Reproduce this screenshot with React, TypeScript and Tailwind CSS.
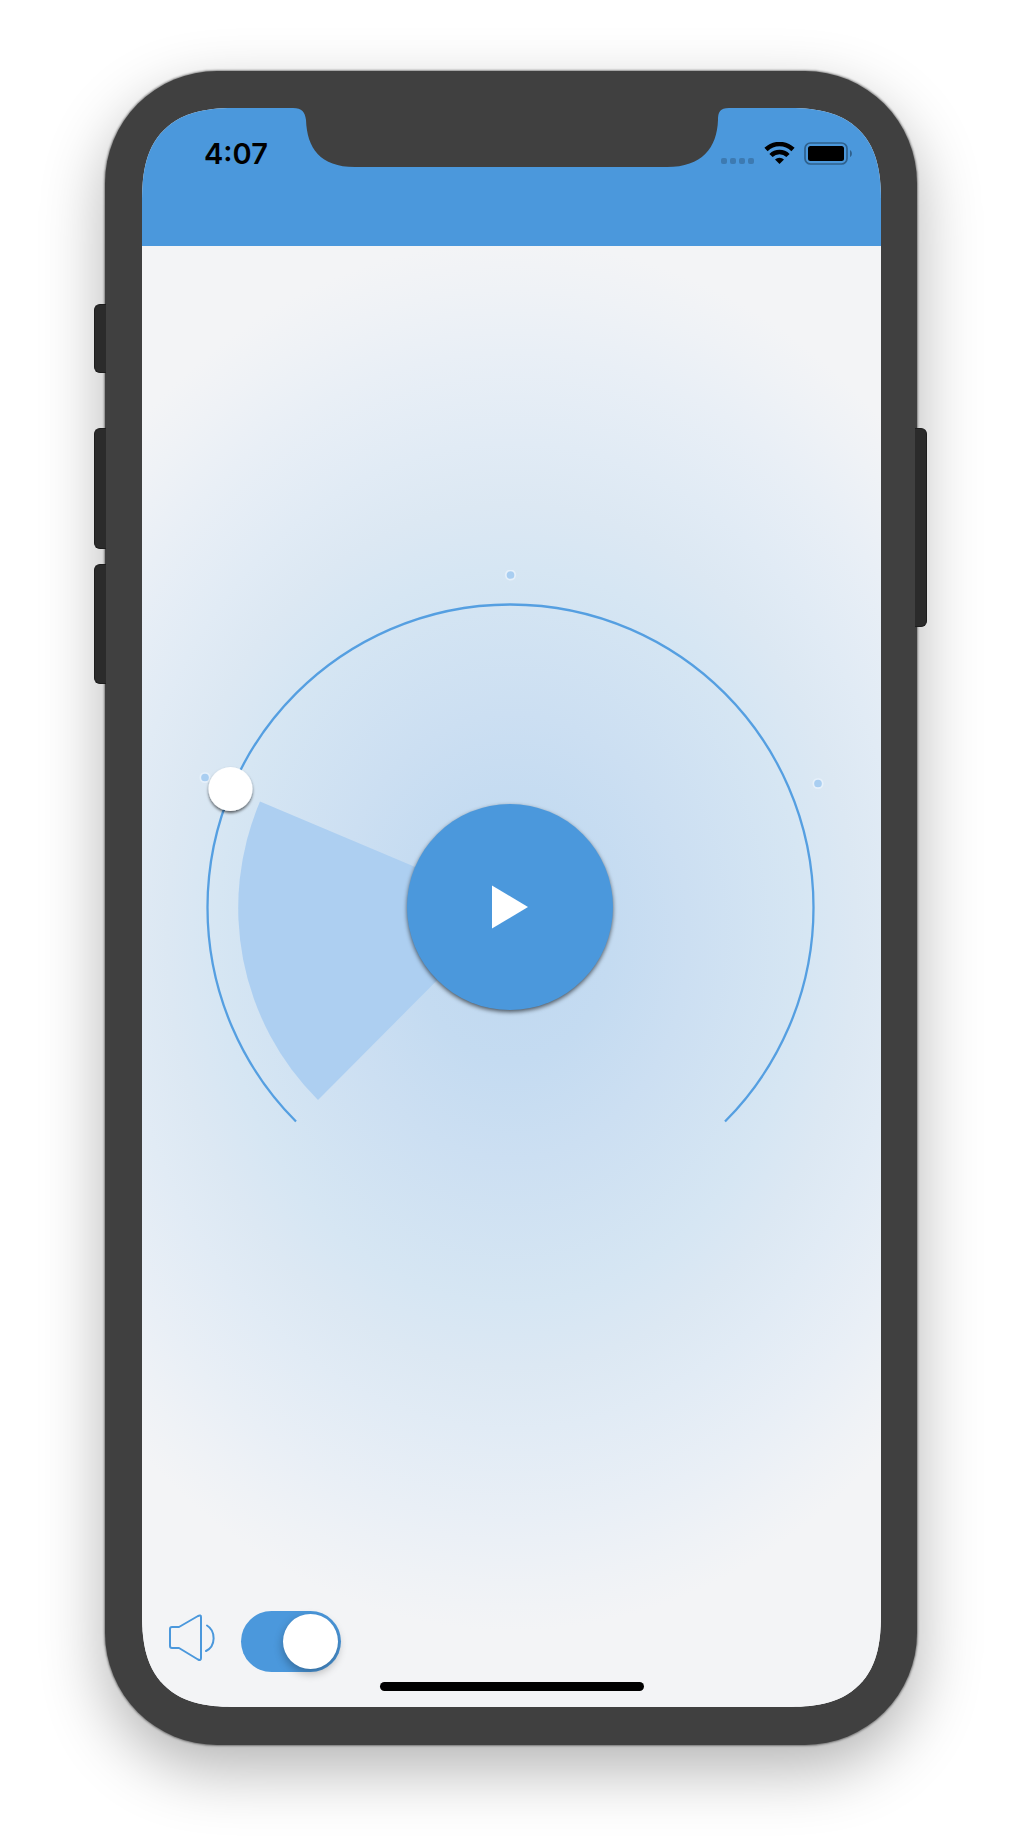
import { useState } from "react";

function Notch() {
  return (
    <svg viewBox="0 0 436 59" className="h-[59px] w-[436px]" fill="#404040" aria-hidden="true">
      <path d="M0 0H436C427 0 425 4 425 12C424 40 409 59 374 59H62C27 59 14 40 13 12C12 4 9 0 0 0Z" />
    </svg>
  );
}

function StatusIcons() {
  return (
    <svg viewBox="0 0 132 24" className="h-6 w-[132px]" aria-hidden="true">
      <g fill="#3d7ab1">
        <rect x="1" y="16" width="6" height="6" rx="2" />
        <rect x="10" y="16" width="6" height="6" rx="2" />
        <rect x="19" y="16" width="6" height="6" rx="2" />
        <rect x="28" y="16" width="6" height="6" rx="2" />
      </g>
      <g fill="none" stroke="#000" strokeWidth="4.600">
        <path d="M46 7.500A19.500 19.500 0 0 1 73 7.500" />
        <path d="M51 13.500A12 12 0 0 1 68 13.500" />
      </g>
      <path d="M59.500 22L55 17.500A6.500 6.500 0 0 1 64 17.500Z" fill="#000" />
      <rect x="85" y="1" width="42" height="21" rx="5.500" fill="none" stroke="#2f608c" strokeWidth="1.700" />
      <rect x="88" y="4" width="36" height="15" rx="2.500" fill="#000" />
      <path d="M130 8C132.500 9.500 132.500 14 130 15Z" fill="#2f608c" />
    </svg>
  );
}

function SpeakerIcon() {
  return (
    <svg viewBox="0 0 48 56" className="h-14 w-12" fill="none" stroke="#4b98dc" strokeWidth="2" strokeLinecap="round" strokeLinejoin="round" aria-hidden="true">
      <path d="M4 13H11L30 2Q33 0.500 33 3V44Q33 47 30 45.500L11 34H4Q2 34 2 32V15Q2 13 4 13Z" />
      <path d="M39 11.500C48 17 48 32 38 37" />
    </svg>
  );
}

function Dial() {
  return (
    <svg viewBox="2 0 640 580" className="block w-full" aria-hidden="true">
      <defs>
        <filter id="knob" x="-30%" y="-30%" width="160%" height="160%">
          <feDropShadow dx="0" dy="2" stdDeviation="1.500" floodColor="#000" floodOpacity="0.6" />
        </filter>
      </defs>
      <path d="M106 551.500A303 303 0 1 1 535 551.500" fill="none" stroke="#559fe1" strokeWidth="2.300" />
      <path d="M320 337L70 231.500A271 271 0 0 0 128 530Z" fill="#adcff1" />
      <g fill="#a9cef1" stroke="#e6f0fa" strokeWidth="1.700">
        <circle cx="320.500" cy="5" r="4.700" />
        <circle cx="15" cy="207.500" r="4.700" />
        <circle cx="628" cy="213.500" r="4.700" />
      </g>
      <circle cx="40.500" cy="219" r="22" fill="#fff" filter="url(#knob)" />
    </svg>
  );
}

export default function App() {
  const [playing, setPlaying] = useState(false);
  const [sound, setSound] = useState(true);

  return (
    <main className="flex min-h-screen justify-center bg-white px-[105px] pt-[71px] pb-[103px] font-[Inter,sans-serif]">
      <div className="relative flex w-full max-w-[812px] rounded-[112px] bg-[#404040] pt-[37px] pr-9 pb-[38px] pl-[37px] shadow-[0_0_2px_1px_rgba(0,0,0,0.4),0_24px_64px_rgba(0,0,0,0.3)]">
        <div className="absolute top-[233px] -left-[11px] h-[69px] w-3 rounded-l-md border border-r-0 border-[#1d1d1d] bg-[#2b2b2b]" />
        <div className="absolute top-[357px] -left-[11px] h-[121px] w-3 rounded-l-md border border-r-0 border-[#1d1d1d] bg-[#2b2b2b]" />
        <div className="absolute top-[493px] -left-[11px] h-[120px] w-3 rounded-l-md border border-r-0 border-[#1d1d1d] bg-[#2b2b2b]" />
        <div className="absolute top-[357px] -right-[10px] h-[199px] w-3 rounded-r-md border border-l-0 border-[#1d1d1d] bg-[#2b2b2b]" />

        <div className="relative flex w-full flex-col overflow-hidden rounded-[95px] bg-[#f3f4f6] [corner-shape:superellipse(1.4)]">
          <header className="flex h-[138px] items-start justify-between bg-[#4b98dc] pt-[34px] pr-[29px] pl-[62px]">
            <div className="absolute inset-x-0 top-0 flex justify-center pr-[2px]">
              <Notch />
            </div>
            <time className="relative text-[29px] leading-6 font-semibold text-black">4:07</time>
            <div className="relative">
              <StatusIcons />
            </div>
          </header>

          <section className="flex grow flex-col bg-[radial-gradient(555px_695px_at_50%_690px,#c0d8f0_0%,#c4dbf1_18%,#ccdff2_32%,#d6e6f3_53%,#dce8f3_62%,#e1ebf5_71%,#e9eff6_84%,#eff2f6_93%,#f3f4f6_100%)]">
            <div className="relative mx-auto mt-[324px] w-full max-w-[640px]">
              <Dial />
              <div className="absolute inset-x-0 top-[234px] flex justify-center pr-[3px]">
                <button
                  type="button"
                  aria-label={playing ? "Pause" : "Play"}
                  onClick={() => setPlaying(!playing)}
                  className="flex size-[206px] items-center justify-center rounded-full bg-[#4b98dc] shadow-[0_2px_4px_rgba(0,0,0,0.6)]"
                >
                  <svg viewBox="0 0 36 44" className="h-11 w-9" fill="#fff" aria-hidden="true">
                    <path d="M0 0.500L36 22L0 43.500Z" />
                  </svg>
                </button>
              </div>
            </div>

            <footer className="mt-auto flex flex-col pb-4">
              <label className="flex items-center gap-[25px] pl-[26px]">
                <SpeakerIcon />
                <input
                  type="checkbox"
                  role="switch"
                  aria-label="Sound"
                  checked={sound}
                  onChange={() => setSound(!sound)}
                  className="flex h-[61px] w-[100px] appearance-none items-center justify-start rounded-full bg-gray-300 p-[3px] before:size-[55px] before:rounded-full before:bg-white before:shadow-[0_4px_10px_rgba(0,0,0,0.3)] before:content-[''] checked:justify-end checked:bg-[#4b98dc]"
                />
              </label>
              <div className="mt-[10px] flex justify-center">
                <div className="h-[9px] w-[264px] rounded-full bg-black" />
              </div>
            </footer>
          </section>
        </div>
      </div>
    </main>
  );
}
